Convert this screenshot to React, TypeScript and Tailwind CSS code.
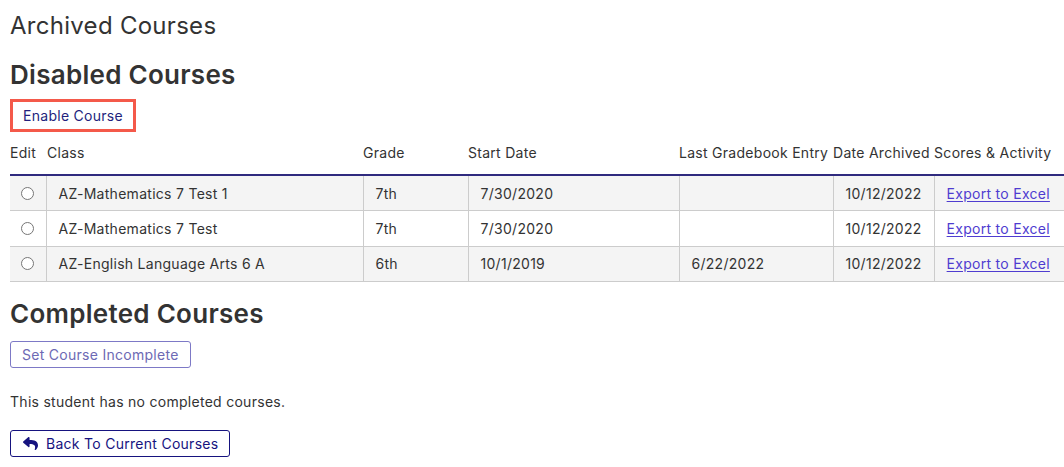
import { FaReply } from 'react-icons/fa'

type Course = {
  name: string
  grade: string
  start: string
  lastEntry: string
  archived: string
}

const courses: Course[] = [
  { name: 'AZ-Mathematics 7 Test 1', grade: '7th', start: '7/30/2020', lastEntry: '', archived: '10/12/2022' },
  { name: 'AZ-Mathematics 7 Test', grade: '7th', start: '7/30/2020', lastEntry: '', archived: '10/12/2022' },
  { name: 'AZ-English Language Arts 6 A', grade: '6th', start: '10/1/2019', lastEntry: '6/22/2022', archived: '10/12/2022' },
]

const cell = 'px-3 border-r border-[#cccccc] h-[35.5px] align-middle'
const th = 'font-normal h-[35px] align-bottom pb-[11px] leading-[20px]'

export default function App() {
  return (
    <div className="min-h-screen bg-white pl-[10px] text-[#333333] font-['Inter','Noto_Sans',sans-serif] text-[14px] tracking-[0.02em]">
      <h1 className="pt-[11px] text-[24px] leading-[30px] font-normal">Archived Courses</h1>
      <h2 className="mt-[18px] text-[26px] leading-[32px] font-semibold">Disabled Courses</h2>

      <div className="mt-[8px] inline-block border-[3px] border-[#f4594a]">
        <button className="px-[10px] h-[27px] text-[14px] leading-[27px] text-[#231f7d] bg-white tracking-[0.02em]">
          Enable Course
        </button>
      </div>

      <table className="mt-[8px] w-[1054px] border-collapse text-left">
        <thead>
          <tr className="border-b-2 border-[#2f2a7e]">
            <th className={`${th} w-[36px]`}>Edit</th>
            <th className={`${th} w-[317px] pl-px`}>Class</th>
            <th className={`${th} w-[105px]`}>Grade</th>
            <th className={`${th} w-[211px]`}>Start Date</th>
            <th className={`${th} w-[154px]`}>Last Gradebook Entry</th>
            <th className={`${th} w-[100px]`}>Date Archived</th>
            <th className={th}>Scores &amp; Activity</th>
          </tr>
        </thead>
        <tbody>
          {courses.map((c, i) => (
            <tr
              key={c.name}
              className={`border-b border-[#cccccc] ${i % 2 === 0 ? 'bg-[#f4f4f4]' : 'bg-white'}`}
            >
              <td className="border-r border-[#cccccc] h-[35.5px] align-middle pl-[11px]">
                <span className="block w-[13px] h-[13px] rounded-full border border-[#767676] bg-white" />
              </td>
              <td className={cell}>{c.name}</td>
              <td className={cell}>{c.grade}</td>
              <td className={cell}>{c.start}</td>
              <td className={cell}>{c.lastEntry}</td>
              <td className={cell}>{c.archived}</td>
              <td className="px-3 h-[35.5px] align-middle">
                <a href="#" className="text-[#4f3cd0] underline underline-offset-2">
                  Export to Excel
                </a>
              </td>
            </tr>
          ))}
        </tbody>
      </table>

      <h2 className="mt-[16px] text-[26px] leading-[32px] font-semibold">Completed Courses</h2>

      <button className="mt-[11px] flex items-center h-[27px] px-[11px] rounded-[3px] border border-[#7d79c6] text-[#6d69b4] text-[14px] bg-white tracking-[0.02em]">
        Set Course Incomplete
      </button>

      <p className="mt-[25px] leading-[18px]">This student has no completed courses.</p>

      <button className="mt-[19px] flex items-center gap-[7px] h-[27px] px-[11px] rounded-[3px] border border-[#16137f] text-[#16137f] text-[14px] bg-white tracking-[0.02em]">
        <FaReply className="w-[17px] h-[15px]" />
        <span>Back To Current Courses</span>
      </button>
    </div>
  )
}
